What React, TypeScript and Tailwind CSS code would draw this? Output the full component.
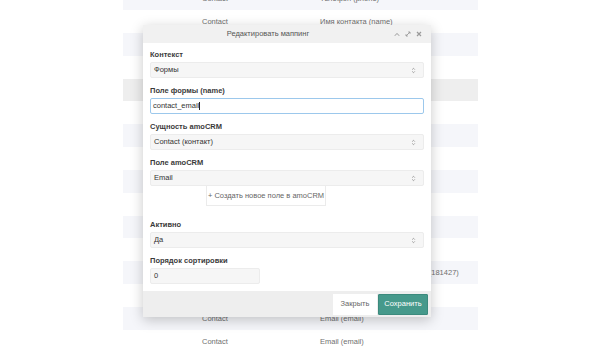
import React from "react";

const font = { fontFamily: '"Liberation Sans", Arial, sans-serif' };

type Row = { a?: string; b?: string; tone: "stripe" | "white" | "hover" };

const rows: Row[] = [
  { a: "Contact", b: "Телефон (phone)", tone: "stripe" },
  { a: "Contact", b: "Имя контакта (name)", tone: "white" },
  { tone: "stripe" },
  { tone: "white" },
  { tone: "hover" },
  { tone: "white" },
  { tone: "stripe" },
  { tone: "white" },
  { tone: "stripe" },
  { tone: "white" },
  { tone: "stripe" },
  { tone: "white" },
  { a: "", b: "Дополнительное поле клиента (181427)", tone: "stripe" },
  { tone: "white" },
  { a: "Contact", b: "Email (email)", tone: "stripe" },
  { a: "Contact", b: "Email (email)", tone: "white" },
];

function Arrows() {
  return (
    <svg width="5" height="7" viewBox="0 0 5 7" className="shrink-0">
      <path d="M1.2 2.6 L2.5 1.3 L3.8 2.6" fill="none" stroke="#8a8a8a" strokeWidth="0.8" />
      <path d="M1.2 4.4 L2.5 5.7 L3.8 4.4" fill="none" stroke="#8a8a8a" strokeWidth="0.8" />
    </svg>
  );
}

function Label({ children }: { children: React.ReactNode }) {
  return <div className="h-[9px] leading-[9px] text-[7.5px] font-bold text-[#3a3a3a]">{children}</div>;
}

function Select({ value }: { value: string }) {
  return (
    <div className="mt-[3px] h-[16px] bg-[#f6f6f6] border border-[#ececec] rounded-[2px] flex items-center justify-between pl-[3px] pr-[7px]">
      <span className="text-[7.5px] text-[#333]">{value}</span>
      <Arrows />
    </div>
  );
}

export default function App() {
  return (
    <div className="relative w-[600px] h-[352px] overflow-hidden bg-white" style={font}>
      {/* background table */}
      <div className="ml-[123px] w-[355px] mt-[-12.67px]">
        {rows.map((r, i) => (
          <div
            key={i}
            className={
              "h-[22.83px] flex items-center text-[7.5px] text-[#6f6f6f] " +
              (r.tone === "stripe" ? "bg-[#f5f6fa]" : r.tone === "hover" ? "bg-[#eeeeee]" : "bg-white")
            }
          >
            <span className="ml-[79px] w-[118px] whitespace-nowrap">{r.a}</span>
            <span className="whitespace-nowrap">{r.b}</span>
          </div>
        ))}
      </div>

      {/* modal */}
      <div className="absolute left-[143px] top-[25px] w-[288px] h-[292px] bg-white flex flex-col shadow-[0_3px_12px_rgba(0,0,0,0.22)]">
        <div className="relative h-[18px] bg-[#f1f1f1] flex items-center justify-center pr-[38px] shrink-0">
          <span className="text-[7.5px] text-[#555]">Редактировать маппинг</span>
          <div className="absolute right-[9px] top-0 h-full flex items-center gap-[5px]">
            <svg width="6" height="5" viewBox="0 0 6 5">
              <path d="M0.8 3.8 L3 1.4 L5.2 3.8" fill="none" stroke="#9a9a9a" strokeWidth="1" />
            </svg>
            <svg width="6" height="6" viewBox="0 0 6 6">
              <path d="M1 5 L5 1 M3.2 1 H5 V2.8 M1 3.2 V5 H2.8" fill="none" stroke="#9a9a9a" strokeWidth="0.9" />
            </svg>
            <svg width="6" height="6" viewBox="0 0 6 6">
              <path d="M1 1 L5 5 M5 1 L1 5" fill="none" stroke="#9a9a9a" strokeWidth="1.2" />
            </svg>
          </div>
        </div>

        <div className="flex-1 px-[7px] pt-[7px]">
          <Label>Контекст</Label>
          <Select value="Формы" />

          <div className="mt-[8px]">
            <Label>Поле формы (name)</Label>
            <div className="mt-[3px] h-[16px] bg-white border border-[#9cc8ec] rounded-[2px] flex items-center pl-[2px]">
              <span className="text-[7.5px] text-[#333]">contact_email</span>
              <span className="w-[1px] h-[8px] bg-[#222]" />
            </div>
          </div>

          <div className="mt-[8px]">
            <Label>Сущность amoCRM</Label>
            <Select value="Contact (контакт)" />
          </div>

          <div className="mt-[8px]">
            <Label>Поле amoCRM</Label>
            <Select value="Email" />
            <div className="ml-[56px] w-[120px] h-[20px] bg-white border border-t-0 border-[#ebebeb] flex items-center justify-center">
              <span className="text-[7.5px] text-[#666]">+ Создать новое поле в amoCRM</span>
            </div>
          </div>

          <div className="mt-[14px]">
            <Label>Активно</Label>
            <Select value="Да" />
          </div>

          <div className="mt-[8px]">
            <Label>Порядок сортировки</Label>
            <div className="mt-[3px] w-[110px] h-[16px] bg-[#f6f6f6] border border-[#ececec] rounded-[2px] flex items-center pl-[3px]">
              <span className="text-[7.5px] text-[#333]">0</span>
            </div>
          </div>
        </div>

        <div className="h-[26px] shrink-0 bg-[#eeeeee] flex items-center justify-end pr-[3px] gap-[1px]">
          <div className="w-[44px] h-[21px] bg-white flex items-center justify-center">
            <span className="text-[7.5px] text-[#666]">Закрыть</span>
          </div>
          <div className="w-[50px] h-[21px] bg-[#46998b] border border-[#3c8a7d] rounded-[1px] flex items-center justify-center">
            <span className="text-[7.5px] text-white">Сохранить</span>
          </div>
        </div>
      </div>
    </div>
  );
}
